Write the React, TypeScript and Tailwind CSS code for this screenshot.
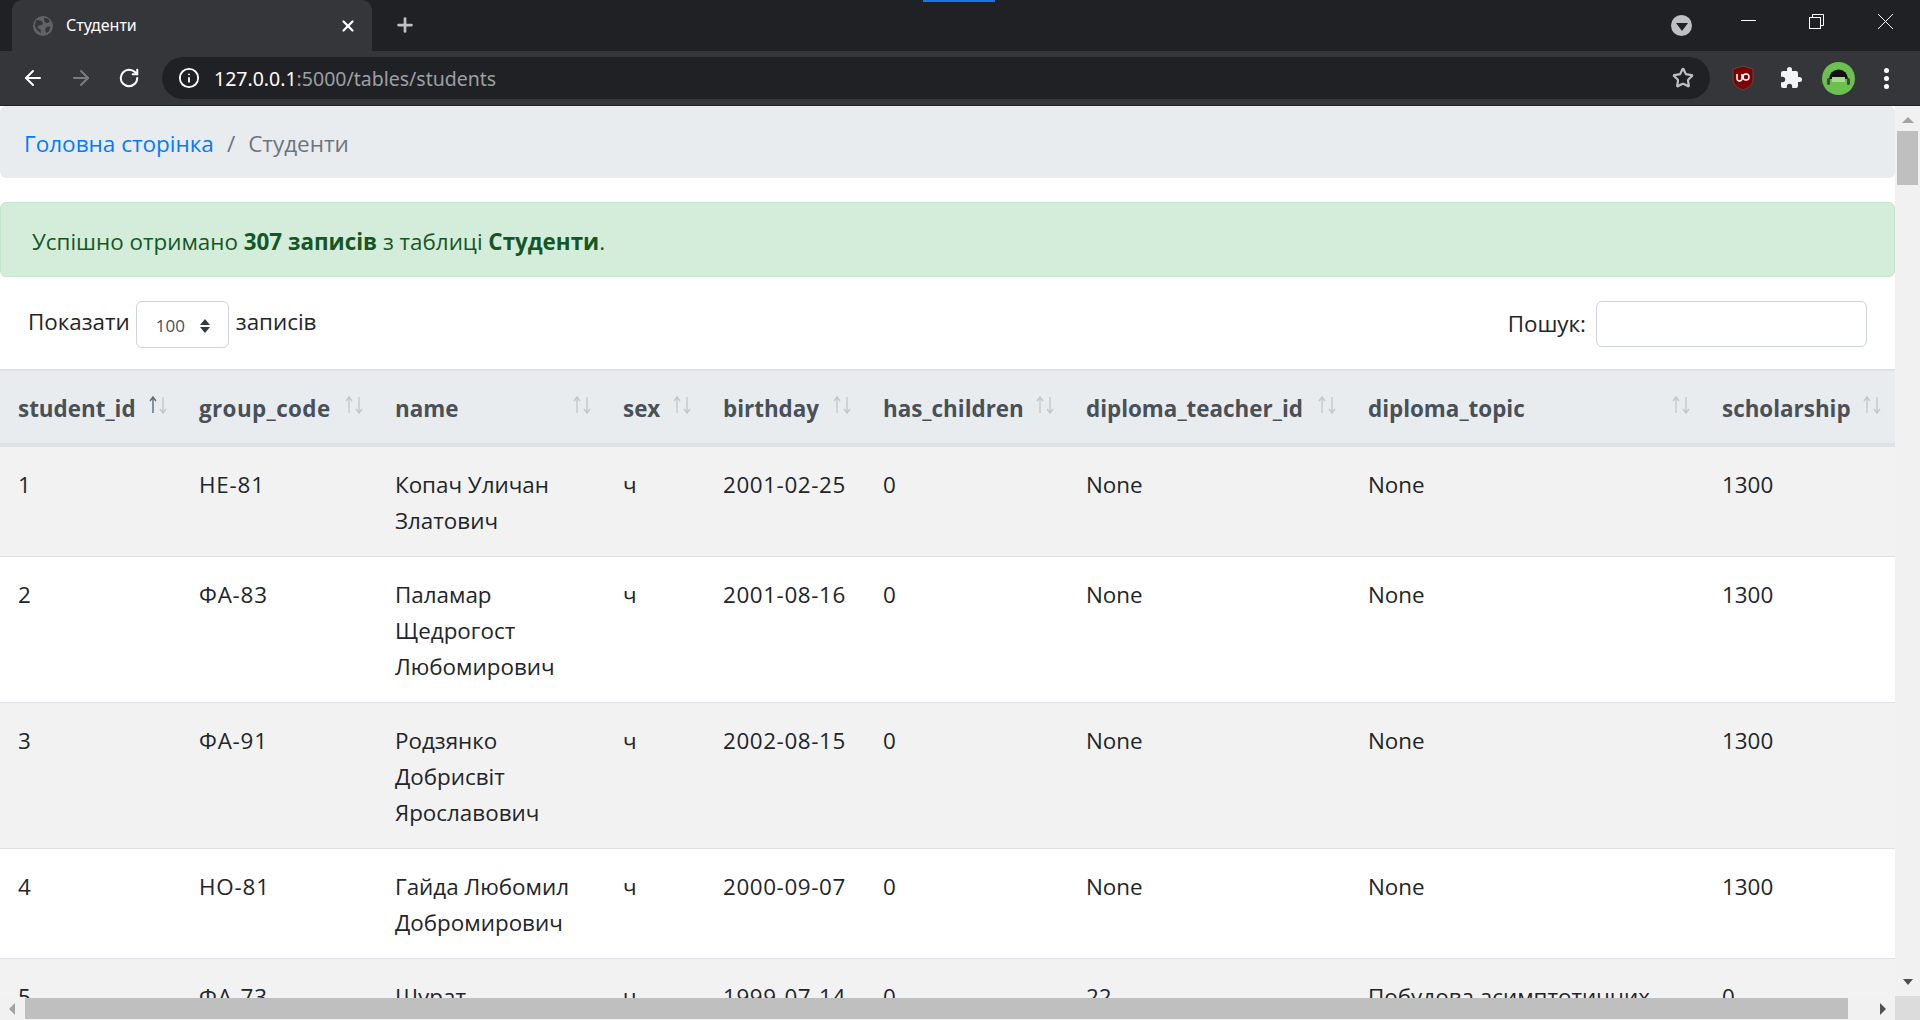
import { Plus, X, ArrowLeft, ArrowRight, RotateCw, Star, Info } from 'lucide-react';

const columns = [
  { key: 'student_id', width: 181, active: true },
  { key: 'group_code', width: 196 },
  { key: 'name', width: 228 },
  { key: 'sex', width: 100 },
  { key: 'birthday', width: 160 },
  { key: 'has_children', width: 203 },
  { key: 'diploma_teacher_id', width: 282 },
  { key: 'diploma_topic', width: 354 },
  { key: 'scholarship', width: 191 },
];

const rows = [
  ['1', 'НЕ-81', 'Копач Уличан Златович', 'ч', '2001-02-25', '0', 'None', 'None', '1300'],
  ['2', 'ФА-83', 'Паламар Щедрогост Любомирович', 'ч', '2001-08-16', '0', 'None', 'None', '1300'],
  ['3', 'ФА-91', 'Родзянко Добрисвіт Ярославович', 'ч', '2002-08-15', '0', 'None', 'None', '1300'],
  ['4', 'НО-81', 'Гайда Любомил Добромирович', 'ч', '2000-09-07', '0', 'None', 'None', '1300'],
  ['5', 'ФА-73', 'Шурат Добромирослав Іванович', 'ч', '1999-07-14', '0', '22', 'Побудова асимптотичних розкладів', '0'],
];

function SortIcon({ active }: { active?: boolean }) {
  return (
    <svg width="22" height="20" viewBox="0 0 22 20" fill="none" strokeWidth="1.4" className="shrink-0 mt-[3px]">
      <path d="M6 18V3M3 6l3-4 3 4" stroke={active ? '#5b6b78' : '#c3c8cc'} />
      <path d="M16 2v15M13 14l3 4 3-4" stroke="#c3c8cc" />
    </svg>
  );
}

function Browser() {
  return (
    <div className="h-[106px] shrink-0 bg-[#202124] relative">
      <div className="absolute left-[923px] top-0 w-[72px] h-[2px] bg-[#1a73e8]" />
      <div className="h-[51px] flex items-end pl-[12px]">
        <div className="w-[360px] h-[51px] bg-[#35363a] rounded-t-[10px] flex items-center pl-[21px] pr-[15px]">
          <svg width="20" height="20" viewBox="0 0 18 18" className="shrink-0">
            <circle cx="9" cy="9" r="9" fill="#5f6368" />
            <path d="M3 3.5l4 .5 2 2-1 2-3 .5-1 2 3 2v3L3 12 1.5 8zM10 1.5l4 1 1 3-3 1-2-2zM12 10l3.5-.5-1 4-2.5 2-1-3z" fill="#35363a" />
          </svg>
          <span className="ml-[13px] pb-[2px] text-[16px] text-white flex-1 font-['Noto_Sans',sans-serif]">Студенти</span>
          <X size={18} strokeWidth={3} className="text-white" />
        </div>
        <Plus size={22} strokeWidth={3} className="text-[#bdc1c6] ml-[22px] mb-[15px]" />
        <div className="flex-1" />
        <div className="w-[21px] h-[21px] mb-[15px] mr-[26px] rounded-full bg-[#bdc1c6] flex items-center justify-center">
          <div className="w-0 h-0 border-x-[6px] border-x-transparent border-t-[8px] border-t-[#202124] mt-[2px]" />
        </div>
        <div className="h-[51px] flex text-white">
          <div className="w-[60px] flex justify-center pt-[20px] mr-[8px]"><div className="w-[15px] h-[1px] bg-white" /></div>
          <div className="w-[60px] flex justify-center pt-[14px] mr-[5px]">
            <svg width="15" height="15" viewBox="0 0 15 15" fill="none" stroke="white"><rect x=".5" y="3.5" width="11" height="11" /><path d="M3.5 3.5v-3h11v11h-3" /></svg>
          </div>
          <div className="w-[69px] flex justify-center pt-[14px]">
            <svg width="15" height="15" viewBox="0 0 15 15" stroke="white" strokeWidth="1"><path d="M0 0l15 15M15 0L0 15" /></svg>
          </div>
        </div>
      </div>
      <div className="h-[55px] bg-[#35363a] border-b border-b-[#202124] flex items-center">
        <ArrowLeft size={24} strokeWidth={2} className="text-white ml-[21px]" />
        <ArrowRight size={24} strokeWidth={2} className="text-[#7a7c80] ml-[24px]" />
        <RotateCw size={22} strokeWidth={2.2} className="text-white ml-[25px]" />
        <div className="w-[1548px] h-[42px] ml-[22px] bg-[#202124] rounded-full flex items-center pl-[16px] pr-[16px]">
          <Info size={22} strokeWidth={2} className="text-white" />
          <span className="ml-[14px] pt-[1px] text-[19.5px] font-['Noto_Sans',sans-serif] text-[#9aa0a6]"><span className="text-white">127.0.0.1</span>:5000/tables/students</span>
          <div className="flex-1" />
          <Star size={22} strokeWidth={2.4} className="text-[#bdc1c6]" />
        </div>
        <svg width="24" height="26" viewBox="0 0 24 26" className="ml-[21px] shrink-0">
          <path d="M12 1l10 3v10c0 6-5 9-10 11C7 23 2 20 2 14V4z" fill="#800000" stroke="#555" strokeWidth=".8" />
          <path d="M6 9v4c0 4 5 4 5 0V9M12 12a3 3 0 0 1 6 0 3 3 0 0 1-6 0" fill="none" stroke="#fff" strokeWidth="1.5" />
        </svg>
        <svg width="24" height="24" viewBox="0 0 24 24" className="ml-[24px] shrink-0">
          <path d="M20.5 11H19V7a2 2 0 0 0-2-2h-4V3.5a2.5 2.5 0 0 0-5 0V5H4a2 2 0 0 0-2 2v3.8h1.5a2.7 2.7 0 0 1 0 5.4H2V20a2 2 0 0 0 2 2h3.8v-1.5a2.7 2.7 0 0 1 5.4 0V22H17a2 2 0 0 0 2-2v-4h1.5a2.5 2.5 0 0 0 0-5z" fill="#f1f3f4" />
        </svg>
        <svg width="33" height="33" viewBox="0 0 33 33" className="ml-[19px] shrink-0">
          <circle cx="16.5" cy="16.5" r="16.5" fill="#6cc04f" />
          <path d="M7 17a9.5 9.5 0 0 1 19 0z" fill="#111" />
          <rect x="5" y="16" width="3" height="7" rx="1.5" fill="#444" />
          <rect x="25" y="16" width="3" height="7" rx="1.5" fill="#444" />
          <rect x="10" y="15" width="13" height="5" fill="#a7dc8e" />
        </svg>
        <div className="ml-[29px] flex flex-col gap-[3px]">
          <div className="w-[5px] h-[5px] rounded-full bg-white" />
          <div className="w-[5px] h-[5px] rounded-full bg-white" />
          <div className="w-[5px] h-[5px] rounded-full bg-white" />
        </div>
      </div>
    </div>
  );
}

function Table() {
  return (
    <table className="w-[1895px] table-fixed border-collapse">
      <colgroup>
        {columns.map((c) => <col key={c.key} style={{ width: c.width }} />)}
      </colgroup>
      <thead>
        <tr className="bg-[#e9ecef] h-[75px] border-t-2 border-t-[#dee2e6] border-b-4 border-b-[#dee2e6]">
          {columns.map((c) => (
            <th key={c.key} className="pl-[18px] pr-[12px] pt-[3px] text-left font-bold text-[#495057] text-[22.4px]">
              <div className="flex justify-between items-start">
                <span className={c.key === 'group_code' ? 'tracking-[0.4px]' : ''}>{c.key}</span>
                <SortIcon active={c.active} />
              </div>
            </th>
          ))}
        </tr>
      </thead>
      <tbody>
        {rows.map((r, i) => (
          <tr key={r[0]} className={`border-b border-b-[#dee2e6] ${i % 2 === 0 ? 'bg-[#f2f2f2]' : 'bg-white'}`}>
            {r.map((v, j) => (
              <td key={j} className={`pl-[18px] pr-[18px] pt-[20px] pb-[17px] align-top text-[22.4px] leading-[36px] text-[#212529] ${j === 4 ? 'tracking-[0.6px]' : ''} ${j === 1 ? 'tracking-[0.8px]' : ''}`}>{v}</td>
            ))}
          </tr>
        ))}
      </tbody>
    </table>
  );
}

export default function App() {
  return (
    <div className="w-[1920px] h-[1020px] overflow-hidden flex flex-col bg-white font-['Open_Sans','Noto_Sans',sans-serif] text-[#212529]">
      <Browser />
      <div className="relative flex-1 overflow-hidden">
        <div className="w-[1895px]">
          <div className="h-[72px] bg-[#e9ecef] rounded-[6px] flex items-center pl-[24px] pt-[4px] text-[22.5px] leading-none mb-[24px]">
            <span className="text-[#007bff]">Головна сторінка</span>
            <span className="text-[#6c757d] mx-[13px]">/</span>
            <span className="text-[#6c757d]">Студенти</span>
          </div>
          <div className="h-[75px] bg-[#d4edda] border border-[#c3e6cb] rounded-[6px] flex items-center pl-[31px] pt-[4px] text-[22.4px] text-[#155724]">
            <span>Успішно отримано <b>307 записів</b> з таблиці <b>Студенти</b>.</span>
          </div>
          <div className="h-[92px] flex items-start justify-between pl-[28px] pr-[28px] pt-[24px]">
            <div className="flex items-center text-[22.4px]">
              <span className="pb-[6px]">Показати</span>
              <div className="w-[93px] h-[47px] ml-[6px] border border-[#ced4da] rounded-[6px] flex items-center pl-[19px] pt-[2px] text-[17px] text-[#495057]">
                100
                <svg width="14" height="18" viewBox="0 0 14 18" className="ml-[13px]"><path d="M7 2l5 6H2zM2 10h10l-5 6z" fill="#343a40" /></svg>
              </div>
              <span className="ml-[7px] pb-[6px]">записів</span>
            </div>
            <div className="flex items-center text-[22.4px]">
              <span className="mr-[10px]">Пошук:</span>
              <div className="w-[271px] h-[46px] border border-[#ced4da] rounded-[6px] bg-white" />
            </div>
          </div>
          <Table />
        </div>
        <Scrollbars />
      </div>
    </div>
  );
}

function Scrollbars() {
  return (
    <>
      <div className="absolute right-0 top-0 bottom-0 w-[25px] bg-[#f1f1f1] flex flex-col items-center">
        <div className="w-0 h-0 mt-[11px] border-x-[6px] border-x-transparent border-b-[6px] border-b-[#a3a3a3]" />
        <div className="w-[21px] h-[54px] mt-[8px] bg-[#bfbfbf]" />
        <div className="flex-1" />
        <div className="w-0 h-0 mb-[35px] border-x-[5px] border-x-transparent border-t-[6px] border-t-[#505050]" />
      </div>
      <div className="absolute left-0 bottom-0 w-[1895px] h-[22px] bg-[#f1f1f1] flex items-start">
        <div className="w-0 h-0 ml-[9px] mt-[5px] border-y-[6px] border-y-transparent border-r-[6px] border-r-[#a3a3a3]" />
        <div className="w-[1823px] h-[21px] ml-[10px] bg-[#bfbfbf]" />
        <div className="w-0 h-0 ml-[32px] mt-[5px] border-y-[6px] border-y-transparent border-l-[6px] border-l-[#505050]" />
      </div>
      <div className="absolute right-0 bottom-0 w-[25px] h-[24px] bg-[#dcdcdc]" />
    </>
  );
}
